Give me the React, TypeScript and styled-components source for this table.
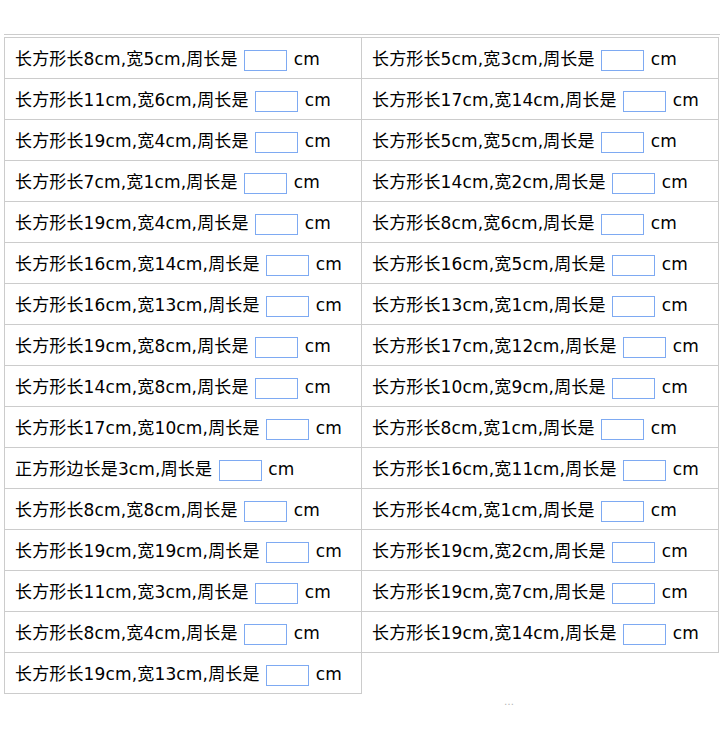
import styled, { createGlobalStyle } from 'styled-components';

type Problem = { text: string };

const rect = (l: number, w: number) => `长方形长${l}cm,宽${w}cm,周长是`;

const leftColumn: Problem[] = [
  { text: rect(8, 5) },
  { text: rect(11, 6) },
  { text: rect(19, 4) },
  { text: rect(7, 1) },
  { text: rect(19, 4) },
  { text: rect(16, 14) },
  { text: rect(16, 13) },
  { text: rect(19, 8) },
  { text: rect(14, 8) },
  { text: rect(17, 10) },
  { text: '正方形边长是3cm,周长是' },
  { text: rect(8, 8) },
  { text: rect(19, 19) },
  { text: rect(11, 3) },
  { text: rect(8, 4) },
  { text: rect(19, 13) },
];

const rightColumn: Problem[] = [
  { text: rect(5, 3) },
  { text: rect(17, 14) },
  { text: rect(5, 5) },
  { text: rect(14, 2) },
  { text: rect(8, 6) },
  { text: rect(16, 5) },
  { text: rect(13, 1) },
  { text: rect(17, 12) },
  { text: rect(10, 9) },
  { text: rect(8, 1) },
  { text: rect(16, 11) },
  { text: rect(4, 1) },
  { text: rect(19, 2) },
  { text: rect(19, 7) },
  { text: rect(19, 14) },
];

const GlobalStyle = createGlobalStyle`
  body {
    margin: 0;
    background: #fff;
    color: #000;
    font-family: "DejaVu Sans", "Noto Sans CJK SC", sans-serif;
  }
`;

const Page = styled.div`
  padding: 34px 0 0 4px;
`;

const TopRule = styled.div`
  width: 716px;
  height: 1px;
  background: #ccc;
  margin-bottom: 2px;
`;

const Sheet = styled.table`
  width: 715px;
  border-collapse: collapse;
  table-layout: fixed;
`;

const Cell = styled.td`
  height: 41px;
  padding: 0 10px;
  border: 1px solid #ccc;
  font-size: 17px;
  letter-spacing: 0.15px;
  white-space: nowrap;
  box-sizing: border-box;
`;

const Answer = styled.input`
  width: 43px;
  height: 21px;
  box-sizing: border-box;
  margin: 0 1px;
  padding: 0 2px;
  border: 1px solid #7eaaf2;
  border-radius: 0;
  outline: none;
  vertical-align: middle;
  font-size: 14px;
`;

const More = styled.div`
  padding-left: 500px;
  margin-top: 1px;
  font-size: 10px;
  line-height: 14px;
  color: #b5b5b5;
`;

const Question = ({ text }: Problem) => (
  <Cell>
    {text} <Answer type="text" /> cm
  </Cell>
);

const App = () => (
  <Page>
    <GlobalStyle />
    <TopRule />
    <Sheet>
      <tbody>
        {leftColumn.map((item, i) => (
          <tr key={i}>
            <Question text={item.text} />
            {rightColumn[i] && <Question text={rightColumn[i].text} />}
          </tr>
        ))}
      </tbody>
    </Sheet>
    <More>…</More>
  </Page>
);

export default App;
